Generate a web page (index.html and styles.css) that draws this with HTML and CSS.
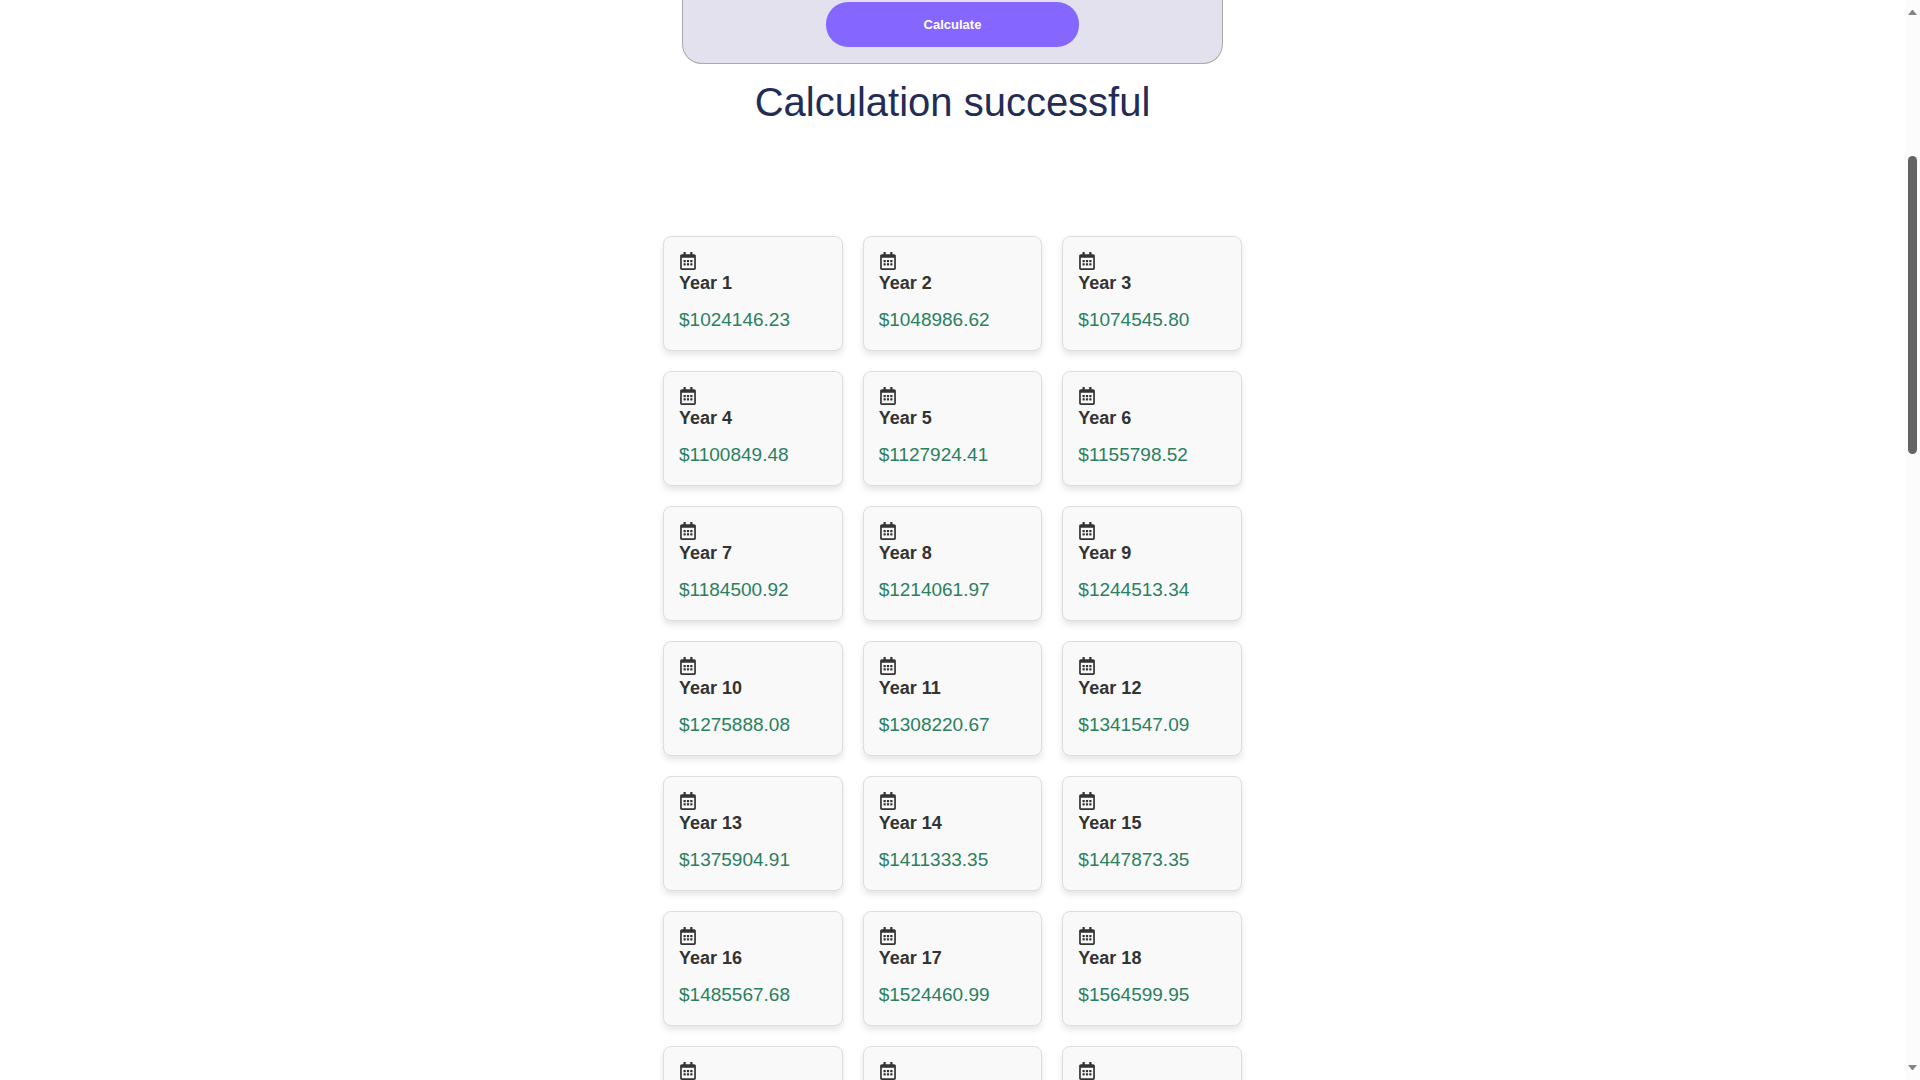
FILE: index.html
```html
<!DOCTYPE html>
<html lang="en">
<head>
<meta charset="utf-8">
<title>Calculation</title>
<link rel="stylesheet" href="styles.css">
</head>
<body>
<svg class="sprite" aria-hidden="true">
  <symbol id="calendar" viewBox="0 0 448 512">
    <path d="M148 288h-40c-6.600 0-12-5.400-12-12v-40c0-6.600 5.400-12 12-12h40c6.600 0 12 5.400 12 12v40c0 6.600-5.400 12-12 12zm108-12v-40c0-6.600-5.400-12-12-12h-40c-6.600 0-12 5.400-12 12v40c0 6.600 5.400 12 12 12h40c6.600 0 12-5.400 12-12zm96 0v-40c0-6.600-5.400-12-12-12h-40c-6.600 0-12 5.400-12 12v40c0 6.600 5.400 12 12 12h40c6.600 0 12-5.400 12-12zm-96 96v-40c0-6.600-5.400-12-12-12h-40c-6.600 0-12 5.400-12 12v40c0 6.600 5.400 12 12 12h40c6.600 0 12-5.400 12-12zm-96 0v-40c0-6.600-5.400-12-12-12h-40c-6.600 0-12 5.400-12 12v40c0 6.600 5.400 12 12 12h40c6.600 0 12-5.400 12-12zm192 0v-40c0-6.600-5.400-12-12-12h-40c-6.600 0-12 5.400-12 12v40c0 6.600 5.400 12 12 12h40c6.600 0 12-5.400 12-12zm96-260v352c0 26.500-21.500 48-48 48H48c-26.500 0-48-21.500-48-48V112c0-26.500 21.500-48 48-48h48V12c0-6.600 5.400-12 12-12h40c6.600 0 12 5.400 12 12v52h128V12c0-6.600 5.400-12 12-12h40c6.600 0 12 5.400 12 12v52h48c26.500 0 48 21.500 48 48zm-48 346V160H48v298c0 3.300 2.700 6 6 6h340c3.300 0 6-2.700 6-6z"/>
  </symbol>
</svg>
<main class="content">
  <form class="panel">
    <button class="calculate" type="button">Calculate</button>
  </form>
  <h1 class="title">Calculation successful</h1>
  <section class="grid">
    <article class="card"><svg class="icon"><use href="#calendar"/></svg><h2 class="year">Year 1</h2><p class="amount">$1024146.23</p></article>
    <article class="card"><svg class="icon"><use href="#calendar"/></svg><h2 class="year">Year 2</h2><p class="amount">$1048986.62</p></article>
    <article class="card"><svg class="icon"><use href="#calendar"/></svg><h2 class="year">Year 3</h2><p class="amount">$1074545.80</p></article>
    <article class="card"><svg class="icon"><use href="#calendar"/></svg><h2 class="year">Year 4</h2><p class="amount">$1100849.48</p></article>
    <article class="card"><svg class="icon"><use href="#calendar"/></svg><h2 class="year">Year 5</h2><p class="amount">$1127924.41</p></article>
    <article class="card"><svg class="icon"><use href="#calendar"/></svg><h2 class="year">Year 6</h2><p class="amount">$1155798.52</p></article>
    <article class="card"><svg class="icon"><use href="#calendar"/></svg><h2 class="year">Year 7</h2><p class="amount">$1184500.92</p></article>
    <article class="card"><svg class="icon"><use href="#calendar"/></svg><h2 class="year">Year 8</h2><p class="amount">$1214061.97</p></article>
    <article class="card"><svg class="icon"><use href="#calendar"/></svg><h2 class="year">Year 9</h2><p class="amount">$1244513.34</p></article>
    <article class="card"><svg class="icon"><use href="#calendar"/></svg><h2 class="year">Year 10</h2><p class="amount">$1275888.08</p></article>
    <article class="card"><svg class="icon"><use href="#calendar"/></svg><h2 class="year">Year 11</h2><p class="amount">$1308220.67</p></article>
    <article class="card"><svg class="icon"><use href="#calendar"/></svg><h2 class="year">Year 12</h2><p class="amount">$1341547.09</p></article>
    <article class="card"><svg class="icon"><use href="#calendar"/></svg><h2 class="year">Year 13</h2><p class="amount">$1375904.91</p></article>
    <article class="card"><svg class="icon"><use href="#calendar"/></svg><h2 class="year">Year 14</h2><p class="amount">$1411333.35</p></article>
    <article class="card"><svg class="icon"><use href="#calendar"/></svg><h2 class="year">Year 15</h2><p class="amount">$1447873.35</p></article>
    <article class="card"><svg class="icon"><use href="#calendar"/></svg><h2 class="year">Year 16</h2><p class="amount">$1485567.68</p></article>
    <article class="card"><svg class="icon"><use href="#calendar"/></svg><h2 class="year">Year 17</h2><p class="amount">$1524460.99</p></article>
    <article class="card"><svg class="icon"><use href="#calendar"/></svg><h2 class="year">Year 18</h2><p class="amount">$1564599.95</p></article>
    <article class="card"><svg class="icon"><use href="#calendar"/></svg></article>
    <article class="card"><svg class="icon"><use href="#calendar"/></svg></article>
    <article class="card"><svg class="icon"><use href="#calendar"/></svg></article>
  </section>
</main>
<aside class="scrollbar" aria-hidden="true">
  <svg class="arrow" viewBox="0 0 9 5"><path d="M0 5L4 0h1l4 5z"/></svg>
  <div class="track"><div class="thumb"></div></div>
  <svg class="arrow" viewBox="0 0 9 5"><path d="M0 0L4 5h1l4-5z"/></svg>
</aside>
</body>
</html>
```
FILE: styles.css
```css
* { box-sizing: border-box; }

body {
  display: flex;
  height: 100vh;
  margin: 0;
  overflow: hidden;
  background: #fff;
  color: #333;
  font-family: "Liberation Sans", Arial, sans-serif;
}

.sprite { display: none; }

.content {
  flex: 1;
  display: flex;
  flex-direction: column;
  align-items: center;
}

.panel {
  display: flex;
  justify-content: center;
  width: 100%;
  max-width: 541px;
  padding: 2px 16px 16px;
  border: 1px solid #aaa;
  border-top: 0;
  border-radius: 0 0 20px 20px;
  background: #e4e1ee;
}

.calculate {
  width: 50%;
  height: 45px;
  padding: 0;
  border: 0;
  border-radius: 22px;
  background: #8566ff;
  color: #fff;
  font-family: inherit;
  font-size: 13px;
  font-weight: bold;
  cursor: pointer;
}

.title {
  margin: 14px 0 110px;
  color: #222c54;
  font-size: 40px;
  font-weight: 400;
  line-height: 48px;
}

.grid {
  display: grid;
  grid-template-columns: repeat(3, 1fr);
  gap: 20px;
  width: 100%;
  max-width: 579px;
}

.card {
  min-height: 115px;
  padding: 15px;
  border: 1px solid #ddd;
  border-radius: 8px;
  background: #f9f9f9;
  box-shadow: 0 4px 6px rgba(0, 0, 0, 0.1);
}

.icon {
  display: block;
  width: 18px;
  height: 18px;
  fill: #333;
}

.year {
  margin: 2px 0 15px;
  font-size: 18px;
  line-height: 22px;
}

.amount {
  margin: 0;
  color: #2a8060;
  font-size: 19px;
  line-height: 22px;
}

.scrollbar {
  display: flex;
  flex-direction: column;
  align-items: center;
  width: 15px;
  padding: 10px 0;
  background: #fcfcfc;
}

.arrow {
  width: 9px;
  height: 5px;
  fill: #858585;
}

.track {
  flex: 1;
  width: 9px;
  padding-top: 141px;
}

.thumb {
  height: 298px;
  border-radius: 5px;
  background: #636363;
}
```
